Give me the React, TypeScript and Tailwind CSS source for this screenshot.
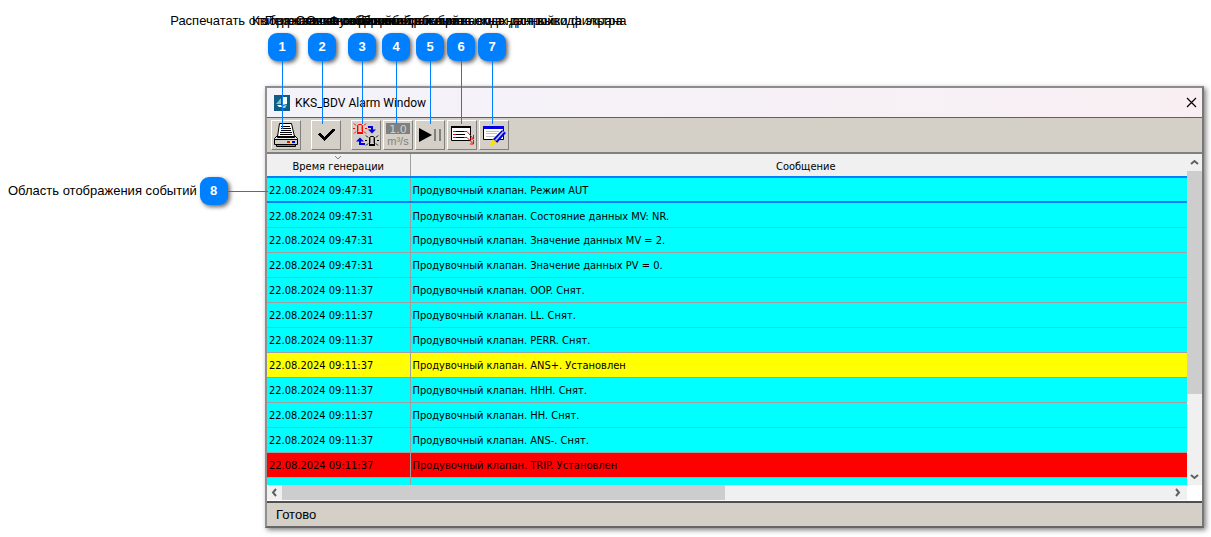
import { useState } from "react";
import type { ReactNode } from "react";

interface Callout {
  num: number;
  text: string;
  // horizontal centre and length of the pointer
  place: string;
  line: string;
}

const callouts: Callout[] = [
  { num: 1, text: "Распечатать отображаемые события", place: "left-[282px]", line: "h-[68px]" },
  { num: 2, text: "Квитирование событий", place: "left-[322px]", line: "h-[63px]" },
  { num: 3, text: "Переключение режима событий", place: "left-[362px]", line: "h-[63px]" },
  { num: 4, text: "Функция отображения", place: "left-[396px]", line: "h-[63px]" },
  { num: 5, text: "Остановка и обновление вывода данных", place: "left-[430px]", line: "h-[63px]" },
  { num: 6, text: "Список сообщений, отображаемых для вывода экрана", place: "left-[461px]", line: "h-[63px]" },
  { num: 7, text: "Просмотр и вызов окна настройки фильтра", place: "left-[492px]", line: "h-[63px]" },
];

interface AlarmEvent {
  time: string;
  message: string;
  color: string;
}

const CYAN = "bg-[#00ffff]";

const events: AlarmEvent[] = [
  { time: "22.08.2024 09:47:31", message: "Продувочный клапан. Режим AUT", color: CYAN },
  { time: "22.08.2024 09:47:31", message: "Продувочный клапан. Состояние данных MV: NR.", color: CYAN },
  { time: "22.08.2024 09:47:31", message: "Продувочный клапан. Значение данных MV = 2.", color: CYAN },
  { time: "22.08.2024 09:47:31", message: "Продувочный клапан. Значение данных PV = 0.", color: CYAN },
  { time: "22.08.2024 09:11:37", message: "Продувочный клапан. OOP. Снят.", color: CYAN },
  { time: "22.08.2024 09:11:37", message: "Продувочный клапан. LL. Снят.", color: CYAN },
  { time: "22.08.2024 09:11:37", message: "Продувочный клапан. PERR. Снят.", color: CYAN },
  { time: "22.08.2024 09:11:37", message: "Продувочный клапан. ANS+. Установлен", color: "bg-[#ffff00]" },
  { time: "22.08.2024 09:11:37", message: "Продувочный клапан. HHH. Снят.", color: CYAN },
  { time: "22.08.2024 09:11:37", message: "Продувочный клапан. HH. Снят.", color: CYAN },
  { time: "22.08.2024 09:11:37", message: "Продувочный клапан. ANS-. Снят.", color: CYAN },
  { time: "22.08.2024 09:11:37", message: "Продувочный клапан. TRIP. Установлен", color: "bg-[#ff0000]" },
  { time: "", message: "", color: CYAN },
];

const Badge = ({ num }: { num: number }) => (
  <span className="flex h-7 w-7 items-center justify-center rounded-[9px] bg-[#0080ff] text-[13px] font-bold text-white shadow-[2px_2px_4px_rgba(0,0,0,0.6)]">
    {num}
  </span>
);

const LogoIcon = () => (
  <svg width="16" height="16" viewBox="0 0 16 16">
    <rect width="16" height="16" fill="#0f5c84" />
    <path d="M8 2h5v7l-5 1z" fill="#fff" />
    <path d="M2 9l5-6v6z" fill="#8fb9cb" />
    <path d="M3 10h4l1 2H5z" fill="#fff" />
    <path d="M8 11l5-1-2 3H9z" fill="#9fd0e4" />
  </svg>
);

const PrinterIcon = () => (
  <svg width="26" height="26" viewBox="0 0 26 26">
    <path d="M4.5 14.5l2-13h12l3 13z" fill="#fff" stroke="#000" />
    <path d="M8 4.5h9M8 6.5h10M8 8.5h10M7 10.5h12M7 12.5h12" stroke="#000" />
    <path d="M4.5 13.5l-3 3v2h23v-2l-3-3v2h-17z" fill="#e8e6e0" stroke="#000" />
    <path d="M1.5 17.5h23v5h-23z" fill="#d4d0c8" stroke="#000" />
    <path d="M3.5 22.5h19v2h-19z" fill="#808080" stroke="#000" />
    <path d="M14 19h3v2h-3z" fill="red" />
    <path d="M17 19h2v2h-2z" fill="#ff0" />
    <path d="M19 19h3v2h-3z" fill="#00f" />
  </svg>
);

const CheckIcon = () => (
  <svg width="22" height="18" viewBox="0 0 22 18" shapeRendering="crispEdges">
    <path d="M2 8l3-1 4 4L18 3h2v2L9 15z" fill="#000" />
  </svg>
);

// 13x13 alarm lamp with rays
const Lamp = ({ color }: { color: string }) => (
  <g stroke={color} fill="none">
    <path d="M4.5 10.5v-7l1-1h3l1 1v7z" />
    <path d="M4 11h6" strokeWidth="2" />
    <path d="M5.5 3v6M8.5 3v6" strokeOpacity="0.4" />
    <path d="M1 1.5l2 2M11 3.5l2-2M0 6.5h2M12 6.5h2M1 11.5l2-2M11 9.5l2 2" />
  </g>
);

const LampsIcon = () => (
  <svg width="26" height="26" viewBox="0 0 26 26">
    <Lamp color="#ff0000" />
    <g transform="translate(12 12)">
      <Lamp color="#000000" />
    </g>
    <path d="M15 5h4v4" fill="none" stroke="#0000e0" strokeWidth="2" />
    <path d="M15 7.5h8l-4 4z" fill="#0000e0" />
    <path d="M7 19v3h5" fill="none" stroke="#0000e0" strokeWidth="2" />
    <path d="M3 19.5h8l-4-4z" fill="#0000e0" />
  </svg>
);

const UnitsIcon = () => (
  <svg width="26" height="24" viewBox="0 0 26 24">
    <rect x="1" width="24" height="11" fill="#808080" />
    <text x="13" y="10" textAnchor="middle" fontSize="11" fill="#d4d0c8" className="font-['DejaVu_Sans',sans-serif]">1.0</text>
    <text x="13" y="22" textAnchor="middle" fontSize="11" fill="#808080" className="font-['Liberation_Sans',sans-serif]">m³/s</text>
  </svg>
);

const PlayPauseIcon = () => (
  <svg width="24" height="16" viewBox="0 0 24 16">
    <path d="M1 1l13 7L1 15z" fill="#000" />
    <path d="M16 2h2v12h-2zM21 2h2v12h-2z" fill="#808080" />
  </svg>
);

const ListIcon = () => (
  <svg width="26" height="26" viewBox="0 0 26 26">
    <path d="M2.5 4.5h19v14h-19z" fill="#fff" stroke="#000" />
    <path d="M2 5h20" stroke="#000" strokeWidth="2" />
    <path d="M7 9.5h9M7 12.5h9M7 15.5h9" stroke="#000" />
    <path d="M4 9.5h3M4 12.5h3M4 15.5h3M15 9.5h3l6 7M15 15.5h3l6 6" stroke="red" fill="none" />
    <path d="M24.5 13v4H21M24.5 18v4H21" stroke="red" fill="none" />
  </svg>
);

const EditIcon = () => (
  <svg width="26" height="26" viewBox="0 0 26 26">
    <path d="M2.5 5.5h20v12h-20z" fill="#fff" stroke="#000" />
    <path d="M2 4h21v3H2z" fill="#0000e0" />
    <path d="M5 9.5h13M5 11.5h11M5 14.5h9" stroke="#c0c0c0" />
    <path d="M12 17l9-9 4 3-9 10z" fill="#0000e0" />
    <path d="M14.5 18.5l8-9" stroke="#c0c8e8" strokeWidth="1.5" />
    <path d="M9 23l3-6 4 4-4 2z" fill="#ffe000" />
  </svg>
);

interface ToolProps {
  label: string;
  children: ReactNode;
  className?: string;
}

const ToolButton = ({ label, children, className = "" }: ToolProps) => (
  <button
    aria-label={label}
    className={`flex h-[30px] w-[30px] shrink-0 items-center justify-center border border-t-white border-l-white border-r-[#808080] border-b-[#808080] bg-[#d4d0c8] ${className}`}
  >
    {children}
  </button>
);

const Arrow = ({ d }: { d: string }) => (
  <svg width="9" height="9" viewBox="0 0 9 9" fill="none" stroke="#606060" strokeWidth="2">
    <path d={d} />
  </svg>
);

const AlarmWindow = () => {
  const [selected, setSelected] = useState<number>(0);

  return (
    <section className="flex flex-col border-2 border-t-[#8c8c8c] border-r-[#777] border-b-[#666] border-l-[#909090] bg-[#d4d0c8] shadow-[2px_2px_5px_rgba(0,0,0,0.5)]">
      {/* title bar */}
      <header className="flex h-[30px] items-center gap-[5px] border-b border-[#606060] bg-linear-to-r from-[#f3f3fa] to-[#f9eff3] pl-[7px]">
        <LogoIcon />
        <h1 className="flex-1 font-['Roboto',sans-serif] text-xs text-black">KKS_BDV Alarm Window</h1>
        <button aria-label="Закрыть" className="flex h-full w-[22px] items-center justify-center">
          <svg width="11" height="11" viewBox="0 0 11 11" stroke="#000" strokeWidth="1.2">
            <path d="M1 1l9 9M10 1l-9 9" />
          </svg>
        </button>
      </header>

      {/* toolbar */}
      <div className="flex h-9 items-center border-b-2 border-[#808080] pl-1">
        <ToolButton label="Печать"><PrinterIcon /></ToolButton>
        <ToolButton label="Квитировать" className="ml-[10px]"><CheckIcon /></ToolButton>
        <ToolButton label="Переключить" className="ml-[10px]"><LampsIcon /></ToolButton>
        <ToolButton label="Значения" className="ml-[2px]"><UnitsIcon /></ToolButton>
        <ToolButton label="Пауза" className="ml-[2px]"><PlayPauseIcon /></ToolButton>
        <ToolButton label="Список" className="ml-[2px]"><ListIcon /></ToolButton>
        <ToolButton label="Фильтр" className="ml-[2px]"><EditIcon /></ToolButton>
      </div>

      {/* events */}
      <div className="flex h-[331px] bg-[#f0f0f0]">
        <div className="min-w-0 flex-1 overflow-hidden">
          <table className="w-full table-fixed border-collapse font-['DejaVu_Sans_Condensed','DejaVu_Sans',sans-serif] text-[11px] text-black">
            <colgroup>
              <col className="w-[143px]" />
              <col />
            </colgroup>
            <thead>
              <tr className="h-[23px] bg-[#f0f0f0]">
                <th className="border-r border-[#a0a0a0] p-0 font-normal leading-[14px]">
                  <svg className="mx-auto block" width="8" height="4" viewBox="0 0 8 4" fill="none" stroke="#808080">
                    <path d="M1 0l3 3 3-3" />
                  </svg>
                  Время генерации
                </th>
                <th className="p-0 pt-1 pl-[14px] font-normal leading-[14px]">Сообщение</th>
              </tr>
            </thead>
            <tbody>
              {events.map((ev, i) => (
                <tr
                  key={i}
                  onClick={() => setSelected(i)}
                  className={`h-[25px] border-[#a0a0a0] ${ev.color} ${i === selected ? "border-y-2 border-y-[#0080ff]" : "border-b"}`}
                >
                  <td className="truncate border-r border-r-[#a0a0a0] p-0 pt-1 pl-[2px]">{ev.time}</td>
                  <td className="truncate p-0 pt-1 pl-[2px]">{ev.message}</td>
                </tr>
              ))}
            </tbody>
          </table>
        </div>
        <div className="flex w-[15px] flex-col items-center">
          <span className="flex h-[17px] items-center"><Arrow d="M1 6l3.5-3L8 6" /></span>
          <div className="h-[223px] w-full bg-[#cdcdcd]" />
          <span className="mt-auto flex h-[18px] items-center"><Arrow d="M1 3l3.5 3L8 3" /></span>
        </div>
      </div>
      <div className="flex h-4 items-center border-b border-white bg-[#f0f0f0]">
        <span className="flex w-[15px] justify-center"><Arrow d="M6 1L3 4.5 6 8" /></span>
        <div className="flex h-full flex-1 items-center">
          <div className="h-full w-[49%] bg-[#cdcdcd]" />
          <span className="mr-[5px] ml-auto"><Arrow d="M3 1l3 3.5L3 8" /></span>
        </div>
        <div className="h-full w-[15px] bg-white" />
      </div>

      <footer className="flex h-[25px] items-center border-t-2 border-[#505050] pl-[9px] font-['Liberation_Sans',sans-serif] text-[13px] text-black">
        Готово
      </footer>
    </section>
  );
};

const App = () => {
  return (
    <main className="relative min-h-screen bg-white pt-[86px] pr-[7px] pl-[265px] font-['Liberation_Sans',Arial,sans-serif] text-[13px] text-black">
      <AlarmWindow />

      {/* numbered callouts over the window */}
      {callouts.map((c) => (
        <div key={c.num} className={`pointer-events-none absolute top-3 flex w-0 flex-col items-center ${c.place}`}>
          <span className="mb-1 leading-[17px] whitespace-nowrap">{c.text}</span>
          <Badge num={c.num} />
          <span className={`w-px bg-[#0080ff] ${c.line}`} />
        </div>
      ))}
      <div className="pointer-events-none absolute top-[177px] left-2 flex items-center">
        <span className="mr-[3px] whitespace-nowrap">Область отображения событий</span>
        <Badge num={8} />
        <span className="h-px w-10 bg-[#0080ff]" />
      </div>
    </main>
  );
};

export default App;
